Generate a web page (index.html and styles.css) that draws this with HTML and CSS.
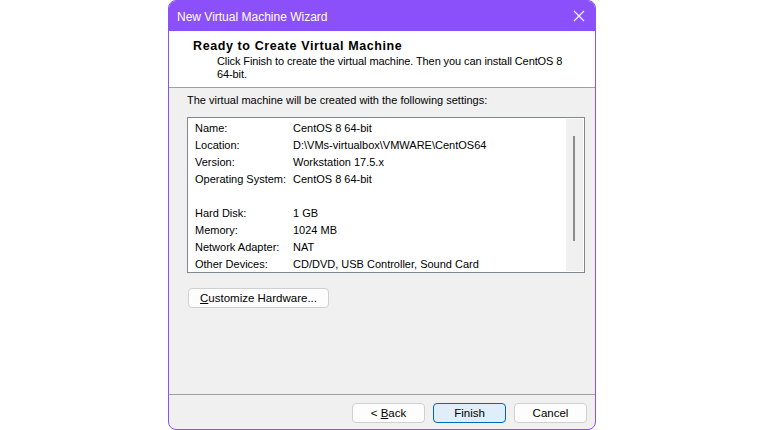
FILE: index.html
```html
<!DOCTYPE html>
<html>
<head>
<meta charset="utf-8">
<link rel="stylesheet" href="styles.css">
</head>
<body>
<div class="window">
  <div class="titlebar">
    <span class="title">New Virtual Machine Wizard</span>
    <svg class="close" width="12" height="12" viewBox="0 0 12 12"><path d="M1 1L11 11M11 1L1 11" stroke="#fff" stroke-width="1.1" fill="none"/></svg>
  </div>
  <div class="header">
    <div class="h-title">Ready to Create Virtual Machine</div>
    <div class="h-sub">Click Finish to create the virtual machine. Then you can install CentOS 8<br>64-bit.</div>
  </div>
  <div class="content">
    <div class="intro">The virtual machine will be created with the following settings:</div>
    <div class="listbox">
      <div class="rows">
        <div class="row"><span class="lbl">Name:</span><span>CentOS 8 64-bit</span></div>
        <div class="row"><span class="lbl">Location:</span><span>D:\VMs-virtualbox\VMWARE\CentOS64</span></div>
        <div class="row"><span class="lbl">Version:</span><span>Workstation 17.5.x</span></div>
        <div class="row"><span class="lbl">Operating System:</span><span>CentOS 8 64-bit</span></div>
        <div class="row"></div>
        <div class="row"><span class="lbl">Hard Disk:</span><span>1 GB</span></div>
        <div class="row"><span class="lbl">Memory:</span><span>1024 MB</span></div>
        <div class="row"><span class="lbl">Network Adapter:</span><span>NAT</span></div>
        <div class="row"><span class="lbl">Other Devices:</span><span>CD/DVD, USB Controller, Sound Card</span></div>
      </div>
      <div class="scrollbar"><div class="thumb"></div></div>
    </div>
    <button class="btn custom"><u>C</u>ustomize Hardware...</button>
  </div>
  <div class="footer">
    <button class="btn">&lt; <u>B</u>ack</button>
    <button class="btn primary">Finish</button>
    <button class="btn">Cancel</button>
  </div>
</div>
</body>
</html>
```
FILE: styles.css
```css
html, body {
  margin: 0;
  padding: 0;
  background: #ffffff;
}
body {
  font-family: "Liberation Sans", Arial, sans-serif;
  font-size: 11px;
  color: #000;
}
.window {
  margin-left: 168px;
  width: 426px;
  height: 428px;
  border: 1px solid #8c50fb;
  border-radius: 8px;
  overflow: hidden;
  display: flex;
  flex-direction: column;
  background: #f0f0f0;
}
.titlebar {
  height: 30px;
  background: #8c50fb;
  color: #fff;
  display: flex;
  align-items: center;
  justify-content: space-between;
  padding: 0 10px 0 8px;
  flex: none;
}
.title {
  font-size: 12px;
  padding-top: 1px;
}
.header {
  background: #fff;
  border-bottom: 1px solid #a0a0a0;
  flex: none;
  box-sizing: border-box;
  height: 57px;
  padding: 7px 0 0 24px;
}
.h-title {
  font-weight: bold;
  font-size: 12.5px;
  letter-spacing: 0.6px;
  line-height: 16px;
}
.h-sub {
  padding-left: 24px;
  margin-top: 1px;
  line-height: 13px;
  letter-spacing: -0.1px;
}
.content {
  flex: 1;
  padding: 5px 10px 0 18px;
}
.intro {
  line-height: 15px;
}
.listbox {
  margin-top: 9px;
  height: 154px;
  border: 1px solid #828790;
  background: #fff;
  display: flex;
  justify-content: space-between;
}
.rows {
  padding: 2px 0 0 7px;
}
.row {
  height: 17px;
  line-height: 17px;
  white-space: nowrap;
}
.lbl {
  display: inline-block;
  width: 98px;
}
.scrollbar {
  width: 17px;
  margin: 1px 1px 1px 0;
  background: #f0f0f0;
  position: relative;
}
.thumb {
  position: absolute;
  left: 7px;
  top: 17px;
  width: 2px;
  height: 105px;
  background: #8a8a8a;
}
.btn {
  font-family: inherit;
  font-size: 11.5px;
  color: #000;
  background: #fdfdfd;
  border: 1px solid #d0d0d0;
  border-radius: 4px;
  height: 20px;
  padding: 0;
}
.custom {
  margin-top: 15px;
  margin-left: 1px;
  width: 141px;
}
.footer {
  border-top: 1px solid #a0a0a0;
  flex: none;
  display: flex;
  justify-content: flex-end;
  gap: 8px;
  padding: 8px 8px 0 0;
  box-sizing: border-box;
  height: 35px;
}
.footer .btn {
  width: 73px;
}
.primary {
  background: #e0eef9;
  border-color: #0067c0;
}
```
